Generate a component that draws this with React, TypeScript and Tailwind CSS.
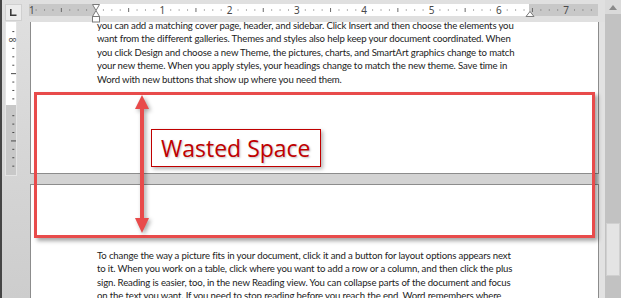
import React from 'react';

const topLines = [
  'you can add a matching cover page, header, and sidebar. Click Insert and then choose the elements you',
  'want from the different galleries. Themes and styles also help keep your document coordinated. When',
  'you click Design and choose a new Theme, the pictures, charts, and SmartArt graphics change to match',
  'your new theme. When you apply styles, your headings change to match the new theme. Save time in',
  'Word with new buttons that show up where you need them.',
];

const bottomLines = [
  'To change the way a picture fits in your document, click it and a button for layout options appears next',
  'to it. When you work on a table, click where you want to add a row or a column, and then click the plus',
  'sign. Reading is easier, too, in the new Reading view. You can collapse parts of the document and focus',
  'on the text you want. If you need to stop reading before you reach the end, Word remembers where',
];

const INCH = 67.3;
const ORIGIN = 66; // x of 0 inside the ruler svg

const HorizontalRuler: React.FC = () => {
  const ticks = [];
  for (let k = -8; k <= 59; k++) {
    const x = ORIGIN + (k * INCH) / 8;
    if (k === 0) continue;
    if (k % 8 === 0) {
      ticks.push(
        <text
          key={k}
          x={k < 0 ? 0 : x}
          y={9.5}
          textAnchor={k < 0 ? 'start' : 'middle'}
          fontSize={10}
          fill="#4a4a4a"
          fontFamily="'Noto Sans', sans-serif"
        >
          {Math.abs(k / 8)}
        </text>
      );
    } else if (k % 4 === 0) {
      ticks.push(<rect key={k} x={x - 0.5} y={4} width={1} height={4} fill="#6a6a6a" />);
    } else {
      ticks.push(<rect key={k} x={x - 0.5} y={5.5} width={1} height={1} fill="#6a6a6a" />);
    }
  }
  return (
    <svg width={569} height={12} className="block">
      <rect x={0} y={0} width={569} height={12} fill="#c8c8c8" />
      <rect x={ORIGIN} y={0} width={500 - ORIGIN} height={12} fill="#ffffff" />
      {ticks}
    </svg>
  );
};

const VerticalRuler: React.FC = () => {
  const marks = [];
  for (let k = -1; k <= 15; k++) {
    const y = 18 + k * 8.41;
    if (k === 0 || k === 8) continue;
    const long = k % 4 === 0;
    marks.push(
      <rect key={k} x={long ? 6 : 7.3} y={y - 0.5} width={long ? 5 : 2} height={1} fill="#4a4a4a" />
    );
  }
  return (
    <svg width={12} height={154} className="block">
      <rect x={0} y={0} width={12} height={154} fill="#e4e4e4" />
      <rect x={1} y={0} width={10} height={83} fill="#ffffff" />
      <rect x={1} y={83} width={10} height={70} fill="#c8c8c8" />
      {marks}
      <text x={7.5} y={18} fontSize={8.5} fill="#4a4a4a" textAnchor="middle" dominantBaseline="central" transform="rotate(90 7.5 18)" fontFamily="'Noto Sans', sans-serif">
        8
      </text>
    </svg>
  );
};

const bodyFont = { fontFamily: "Lato, 'Noto Sans', sans-serif" };

const TextLines: React.FC<{ lines: string[] }> = ({ lines }) => (
  <div className="text-[9.6px] leading-[13.4px] text-[#222222] tracking-[-0.15px]" style={bodyFont}>
    {lines.map((l, i) => (
      <div key={i} className="whitespace-nowrap">{l}</div>
    ))}
  </div>
);

export default function App() {
  return (
    <div className="relative flex w-[621px] h-[298px] overflow-hidden bg-[#dcdcdc]">
      {/* dark window edge */}
      <div className="w-[2px] shrink-0 bg-[#454545]" />

      {/* left gutter: tab selector + vertical ruler */}
      <div className="w-[28px] shrink-0 flex flex-col items-start pl-[3px] pt-[4px] bg-gradient-to-b from-[#e0e0e0] to-[#cdcdcd]">
        <div className="w-[17px] h-[17px] bg-[#ececec] border border-[#d0d0d0] flex items-center justify-center">
          <svg width={8} height={7} viewBox="0 0 8 7">
            <path d="M0 0h1.6v5.4H6.5V7H0z" fill="#3a3a3a" />
          </svg>
        </div>
        <div className="mt-px">
          <VerticalRuler />
        </div>
      </div>

      {/* main area */}
      <div className="w-[575px] shrink-0 flex flex-col bg-[#e0e0e0]">
        <div className="relative h-[22px] shrink-0 pt-[4px] -ml-px">
          <HorizontalRuler />
          {/* left indent hourglass */}
          <svg width={10} height={20} className="absolute left-[62px] top-[3px]">
            <path d="M1.5 1.5h7L5 7.5z" fill="#fff" stroke="#7a7a7a" />
            <path d="M5 7.5L1.5 13.5h7z" fill="#fff" stroke="#7a7a7a" />
            <rect x={1.5} y={13.5} width={7} height={5.5} fill="#fff" stroke="#7a7a7a" />
          </svg>
          {/* right indent */}
          <svg width={10} height={8} className="absolute left-[496px] top-[10px]">
            <path d="M5 1.5L1 6.5h8z" fill="#fff" stroke="#7a7a7a" />
          </svg>
        </div>

        <div className="flex flex-1 overflow-hidden">
          <div className="w-[569px] shrink-0 flex flex-col bg-[#d3d3d3]">
            <div className="h-[152px] shrink-0 bg-white border-x border-b border-[#8c8c8c] pl-[66px] overflow-hidden">
              <div className="-mt-[3px]">
                <TextLines lines={topLines} />
              </div>
            </div>
            <div className="h-[10px] shrink-0" />
            <div className="flex-1 bg-white border-x border-t border-[#8c8c8c] pl-[66px] pt-[64px]">
              <TextLines lines={bottomLines} />
            </div>
          </div>
          <div className="flex-1 bg-[#e2e2e2]" />
        </div>
      </div>

      {/* scrollbar */}
      <div className="w-[16px] shrink-0 flex flex-col bg-[#c6c6c6]">
        <div className="h-[14px] shrink-0 bg-[#dadada] flex items-center justify-center">
          <svg width={8} height={5}>
            <path d="M4 0L8 5H0z" fill="#8a8a8a" />
          </svg>
        </div>
        <div className="flex-1 flex flex-col px-px bg-[#c2c2c2]">
          <div className="mt-[209px] h-[53px] bg-[#e4e4e4] border border-[#d0d0d0]" />
        </div>
      </div>

      {/* annotation overlay */}
      <div className="absolute left-[34px] top-[92px] w-[561px] h-[146px] border-[3px] border-[#e84b4b] shadow-[3px_3px_4px_rgba(0,0,0,0.35)]" />
      <svg width={16} height={141} className="absolute left-[134px] top-[94px] drop-shadow-[2px_2px_2px_rgba(0,0,0,0.35)]">
        <path d="M8 1L1 15h14z" fill="#e84b4b" />
        <rect x={6} y={14} width={4} height={111} fill="#e84b4b" />
        <path d="M1 124h14L8 139z" fill="#e84b4b" />
      </svg>
      <div className="absolute left-[151px] top-[129px] w-[170px] h-[38px] bg-white border border-[#c00000] shadow-[2px_2px_4px_rgba(0,0,0,0.3)] flex items-center pl-[9px]">
        <span
          className="text-[23px] leading-none text-[#c00000] whitespace-nowrap [text-shadow:1px_1px_2px_rgba(0,0,0,0.25)]"
          style={{ fontFamily: "'Open Sans', 'Noto Sans', sans-serif" }}
        >
          Wasted Space
        </span>
      </div>
    </div>
  );
}
